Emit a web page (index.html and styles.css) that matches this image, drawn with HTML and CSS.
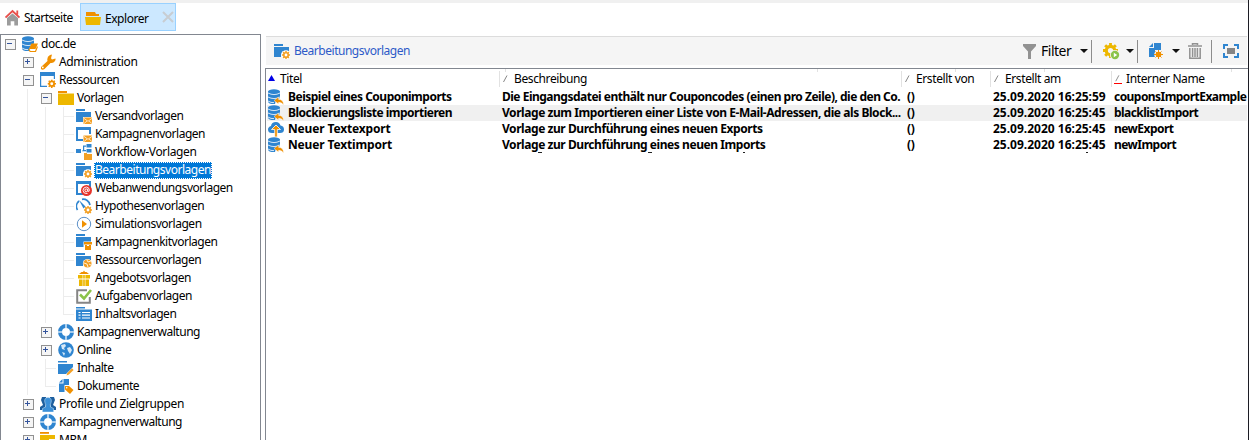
FILE: index.html
```html
<!DOCTYPE html>
<html lang="de">
<head>
<meta charset="utf-8">
<title>Explorer</title>
<link rel="stylesheet" href="styles.css">
</head>
<body>
<svg class="defs" width="0" height="0">
  <symbol id="slash" viewBox="0 0 8 10"><path d="M1.500 8L5 1.500" stroke="#777" stroke-width=".9"/></symbol>
  <symbol id="gear" viewBox="0 0 16 16"><circle cx="8" cy="8" r="4.5" fill="none" stroke="currentColor" stroke-width="3.400"/><path d="M8 0v3M8 13v3M0 8h3M13 8h3M2.3 2.3l2 2M11.7 11.7l2 2M2.3 13.7l2-2M11.7 4.3l2-2" stroke="currentColor" stroke-width="3"/></symbol>
  <symbol id="foldercut" viewBox="0 0 16 16"><path d="M0 1h9v2H0zM0 4h15v4H9q-2 1-2 6H0z" fill="#2f85d0"/></symbol>
  <symbol id="yfolder" viewBox="0 0 16 16"><path d="M0 1h9v2H0z" fill="#f09000"/><path d="M0 3.500h16V15H0z" fill="#edb700"/></symbol>
  <symbol id="window" viewBox="0 0 16 16"><path d="M0 1h15v7h-2V4H2v9h5v2H0z" fill="#2f85d0"/></symbol>
  <symbol id="mail" viewBox="0 0 16 16"><path d="M7.500 9.500H16V16H7.500z" fill="#f3a025"/><path d="M8 10.400l4 2.900 4-2.900M8 15.600l3-2.600M16 15.600L13 13" fill="none" stroke="#fff" stroke-width=".7"/></symbol>
  <symbol id="db" viewBox="0 0 16 16"><path d="M0 2.6v9.8C0 14 2.500 15 6 15h1l1-4 4-2V2.600z" fill="#2f85d0"/><ellipse cx="6" cy="2.6" rx="6" ry="2.4" fill="#2f85d0"/><path d="M0 4q6 3.200 12 0M0 8q6 3.200 12 0M0 12q3 2 6 1.600" fill="none" stroke="#fff" stroke-width=".8"/></symbol>
  <symbol id="import" viewBox="0 0 16 16"><use href="#db"/><path d="M6 11.500L10.500 8v2.300q5 .200 5 5.700-1.500-3-5-2.600V15z" fill="#f09000" stroke="#fff" stroke-width=".4"/></symbol>
  <symbol id="export" viewBox="0 0 16 16"><path d="M4 12Q0 12 0 8.500 0 6 3 5q.5-4 5-4 3.500 0 4.500 3.500Q16 5 16 8.500 16 12 12 12z" fill="#2f85d0"/><path d="M8 4l4.500 4.500H9.300V16H6.700V8.500H3.500z" fill="#f09000" stroke="#fff" stroke-width=".8"/></symbol>
  <symbol id="root" viewBox="0 0 16 16"><use href="#db"/><path d="M9.500 7.500H16l-2.500 5.500H7z" fill="#f09000"/><path d="M7 13q0 2.500 2 2.500h4.500l2-5" fill="none" stroke="#f09000" stroke-width="1.200"/></symbol>
  <symbol id="wrench" viewBox="0 0 16 16"><path d="M1 13l6.500-6Q6.500 3 10 1l2-.5-1 3.800 1 1.200 3.500-1L15.500 6q-1.500 3.500-5 3L4.500 15Q2.500 16.500 1 15z" fill="#f09000"/><circle cx="2.800" cy="13.400" r=".9" fill="#fff"/></symbol>
  <symbol id="wingear" viewBox="0 0 16 16"><path d="M0 0h15v7h-1.200V4H1.200v9.800H7V15H0z" fill="#2f85d0"/><use href="#gear" x="7.500" y="7.500" width="8.500" height="8.500" color="#f09000"/></symbol>
  <symbol id="f-mail" viewBox="0 0 16 16"><path d="M0 1h9v2H0zM0 4h15v5H7v5H0z" fill="#2f85d0"/><use href="#mail"/></symbol>
  <symbol id="w-mail" viewBox="0 0 16 16"><use href="#window"/><use href="#mail"/></symbol>
  <symbol id="flow" viewBox="0 0 16 16"><path d="M0 5h5v4H0zM10.500 0h5v3.500h-5zM10.500 5h5v3.500h-5zM6 6.500h1v-5h3v1.200H8.200V6H10v1.200H6z" fill="#2f85d0"/><path d="M8 9h3v1h5v6H8z" fill="#f3a025"/></symbol>
  <symbol id="f-gear" viewBox="0 0 16 16"><use href="#foldercut"/><circle cx="12" cy="12" r="4.700" class="halo"/><use href="#gear" x="8" y="8" width="8" height="8" color="#f3a025"/></symbol>
  <symbol id="web" viewBox="0 0 16 16"><use href="#window"/><circle cx="10.500" cy="10.500" r="5.500" fill="#e6332a"/><circle cx="10.300" cy="10.300" r="1.400" fill="none" stroke="#fff"/><path d="M11.800 8.700v2.500q1.500.800 1.700-1Q13 7 10.300 7 7 7.300 7 10.500 7.300 14 11.500 13.600" fill="none" stroke="#fff" stroke-width=".9"/></symbol>
  <symbol id="gauge" viewBox="0 0 16 16"><path d="M1.500 12A7 7 0 0 1 3 3M6 1.300A7 7 0 0 1 14 7" fill="none" stroke="#2f85d0" stroke-width="1.700"/><path d="M3 2l6.500 6.500L7.500 10.500z" fill="#2f85d0"/><use href="#gear" x="8" y="8" width="8" height="8" color="#f3a025"/></symbol>
  <symbol id="play" viewBox="0 0 16 16"><circle cx="8" cy="8" r="6.700" fill="#fff" stroke="#5b8fc8"/><path d="M6 4.300L11 8l-5 3.700z" fill="#f09000"/></symbol>
  <symbol id="f-box" viewBox="0 0 16 16"><path d="M0 0h9v2H0zM0 3h15v4.500H7.500V13H0z" fill="#2f85d0"/><path d="M8 8h8v2.500H8zM9 11h6v5H9z" fill="#f09000"/><path d="M11 11.500h2" stroke="#fff"/></symbol>
  <symbol id="f-globe" viewBox="0 0 16 16"><use href="#foldercut"/><circle cx="11.500" cy="11.500" r="4.600" fill="#fff"/><circle cx="11.500" cy="11.500" r="4" fill="#f3a025"/><path d="M8 11l3 1 1 3M11 8l1 2 3-1M13 12l2 1" fill="none" stroke="#fff" stroke-width=".8"/></symbol>
  <symbol id="gift" viewBox="0 0 16 16"><path d="M2 5h12v3.500H2zM3 9.500h10V16H3z" fill="#edb700"/><path d="M3 4l2.500-2h1.500L8 .5 9 2h1.500L13 4z" fill="#f09000"/><path d="M6.800 5v11M9.200 5v11" stroke="#fff" stroke-width=".6"/></symbol>
  <symbol id="check" viewBox="0 0 16 16"><path d="M11 2.200H1.200v12.600h12.600V9" fill="none" stroke="#858585" stroke-width="2"/><path d="M4 6.500l4 4L15 2" fill="none" stroke="#8bc34a" stroke-width="2.600"/></symbol>
  <symbol id="content" viewBox="0 0 16 16"><path d="M0 1h9v1.500H0zM0 3.500h16V15H0z" fill="#2f85d0"/><path d="M2.500 6.500h2M6 6.500h8M2.500 9.200h2M6 9.200h8M2.500 12h2M6 12h8" stroke="#fff" stroke-width="1.200"/></symbol>
  <symbol id="ring" viewBox="0 0 16 16"><circle cx="8" cy="8" r="6" fill="none" stroke="#2f85d0" stroke-width="4"/><path d="M8 0v4M8 12v4M0 8h4M12 8h4" stroke="#cfe3f5" stroke-width="1.600"/></symbol>
  <symbol id="globe" viewBox="0 0 16 16"><circle cx="8" cy="8" r="7.800" fill="#2f85d0"/><path d="M3 3l4-1 1 2-2 2 1 2-3-1zM9 6l3-1 2 3-2 4-2-3zM4 10l3 1-1 3z" fill="#d8e9f7"/></symbol>
  <symbol id="f-pen" viewBox="0 0 16 16"><path d="M0 1h9v1.500H0zM0 4h15v3L8 14H0z" fill="#2f85d0"/><path d="M8.500 15.500l.8-2.500L14 8.300l1.600 1.600-4.700 4.700z" fill="#f3a025"/></symbol>
  <symbol id="doc" viewBox="0 0 16 16"><path d="M5.500 1H11v6H6.500v7H1V5.500h4.500zM1 4.500L4.500 1v3.500z" fill="#2f85d0"/><path d="M7 8h4l4.500 4-3.500 4-5-4.500z" fill="#f09000"/><circle cx="8.700" cy="9.700" r=".8" fill="#fff"/></symbol>
  <symbol id="people" viewBox="0 0 16 16"><path d="M2 1h4v6l-1 7H0v-3l3-2-2-5zM14 1h-4v6l1 7h5v-3l-3-2 2-5z" fill="#1d5f9f"/><path d="M8 1.500c4 0 3.800 4 2.300 7L10.500 11l3 1.500V16h-11v-3.500l3-1.500.2-2.500C4.200 5.500 4 1.500 8 1.500z" fill="#3b90d8" stroke="#b9d8f1" stroke-width=".6"/></symbol>
  <symbol id="mrm" viewBox="0 0 16 16"><path d="M0 0h9v1.800H0z" fill="#f09000"/><path d="M0 3h15v4H9v8H0z" fill="#edb700"/></symbol>
</svg>

<nav class="tabs">
  <div class="tab home">
    <svg width="15" height="17" viewBox="0 0 15 17"><path d="M2 9l5.500-4.500L13 9v7.500H9.300v-4.300H5.700v4.300H2z" fill="#9c9c9c"/><path d="M.5 8.500l7-6.500 7 6.500M12.300 1.500v4" fill="none" stroke="#e8504c" stroke-width="1.800"/></svg>
    <span>Startseite</span>
  </div>
  <div class="tab active">
    <svg width="16" height="13" viewBox="0 0 16 13"><path d="M1 0h9l1 2h3v2H1z" fill="#f09000"/><path d="M0 5h16l-1 8H1z" fill="#edb700"/></svg>
    <span>Explorer</span>
    <svg class="close" width="12" height="12" viewBox="0 0 12 12"><path d="M1 1l10 10M11 1L1 11" stroke="#c8cdd2" stroke-width="2"/></svg>
  </div>
</nav>

<main class="panes">
  <div class="tree">
    <div class="node"><b class="box"></b><svg class="ic"><use href="#root"/></svg><span>doc.de</span></div>
    <div class="node"><i></i><b class="box plus"></b><svg class="ic"><use href="#wrench"/></svg><span class="wide">Administration</span></div>
    <div class="node"><i></i><b class="box"></b><svg class="ic"><use href="#wingear"/></svg><span>Ressourcen</span></div>
    <div class="node"><i></i><i class="v"></i><b class="box"></b><svg class="ic"><use href="#yfolder"/></svg><span>Vorlagen</span></div>
    <div class="node"><i></i><i class="v"></i><i class="v"></i><i class="v h"></i><svg class="ic"><use href="#f-mail"/></svg><span>Versandvorlagen</span></div>
    <div class="node"><i></i><i class="v"></i><i class="v"></i><i class="v h"></i><svg class="ic"><use href="#w-mail"/></svg><span>Kampagnenvorlagen</span></div>
    <div class="node"><i></i><i class="v"></i><i class="v"></i><i class="v h"></i><svg class="ic"><use href="#flow"/></svg><span class="wide">Workflow-Vorlagen</span></div>
    <div class="node"><i></i><i class="v"></i><i class="v"></i><i class="v h"></i><svg class="ic"><use href="#f-gear"/></svg><span class="selected">Bearbeitungsvorlagen</span></div>
    <div class="node"><i></i><i class="v"></i><i class="v"></i><i class="v h"></i><svg class="ic"><use href="#web"/></svg><span>Webanwendungsvorlagen</span></div>
    <div class="node"><i></i><i class="v"></i><i class="v"></i><i class="v h"></i><svg class="ic"><use href="#gauge"/></svg><span>Hypothesenvorlagen</span></div>
    <div class="node"><i></i><i class="v"></i><i class="v"></i><i class="v h"></i><svg class="ic"><use href="#play"/></svg><span>Simulationsvorlagen</span></div>
    <div class="node"><i></i><i class="v"></i><i class="v"></i><i class="v h"></i><svg class="ic"><use href="#f-box"/></svg><span>Kampagnenkitvorlagen</span></div>
    <div class="node"><i></i><i class="v"></i><i class="v"></i><i class="v h"></i><svg class="ic"><use href="#f-globe"/></svg><span>Ressourcenvorlagen</span></div>
    <div class="node"><i></i><i class="v"></i><i class="v"></i><i class="v h"></i><svg class="ic"><use href="#gift"/></svg><span>Angebotsvorlagen</span></div>
    <div class="node"><i></i><i class="v"></i><i class="v"></i><i class="v h"></i><svg class="ic"><use href="#check"/></svg><span>Aufgabenvorlagen</span></div>
    <div class="node"><i></i><i class="v"></i><i class="v"></i><i class="end h"></i><svg class="ic"><use href="#content"/></svg><span>Inhaltsvorlagen</span></div>
    <div class="node"><i></i><i class="v"></i><b class="box plus"></b><svg class="ic"><use href="#ring"/></svg><span>Kampagnenverwaltung</span></div>
    <div class="node"><i></i><i class="v"></i><b class="box plus"></b><svg class="ic"><use href="#globe"/></svg><span>Online</span></div>
    <div class="node"><i></i><i class="v"></i><i class="v h"></i><svg class="ic"><use href="#f-pen"/></svg><span>Inhalte</span></div>
    <div class="node"><i></i><i class="v"></i><i class="end h"></i><svg class="ic"><use href="#doc"/></svg><span>Dokumente</span></div>
    <div class="node"><i></i><b class="box plus"></b><svg class="ic"><use href="#people"/></svg><span class="wide">Profile und Zielgruppen</span></div>
    <div class="node"><i></i><b class="box plus"></b><svg class="ic"><use href="#ring"/></svg><span>Kampagnenverwaltung</span></div>
    <div class="node"><i></i><b class="box plus"></b><svg class="ic"><use href="#mrm"/></svg><span>MRM</span></div>
  </div>

  <section class="content">
    <header class="toolbar">
      <svg class="ic"><use href="#f-gear"/></svg>
      <h1>Bearbeitungsvorlagen</h1>
      <div class="tools">
        <svg width="13" height="15" viewBox="0 0 13 15"><path d="M0 0h13v2L8 7.500V15H5V7.500L0 2z" fill="#929292"/></svg>
        <span class="filter">Filter</span><em class="caret"></em><em class="sep"></em>
        <svg class="t-gear" width="17" height="17" viewBox="0 0 17 17"><use href="#gear" width="15" height="15" color="#edb700"/><circle cx="12" cy="12" r="5" fill="#f5f5f5"/><circle cx="12" cy="12" r="4.200" fill="#8bc34a"/><path d="M10.800 9.800l3.400 2.200-3.400 2.200z" fill="#fff"/></svg>
        <em class="caret"></em><em class="sep"></em>
        <svg class="t-new" width="14" height="16" viewBox="0 0 14 16"><path d="M5 0h7v7H6v7H0V5h5zM0 4l4-4v4z" fill="#2f85d0"/><circle cx="9.500" cy="11.500" r="4.300" fill="#f5f5f5"/><circle cx="9.500" cy="11.500" r="2.800" fill="#f09000"/><path d="M9.500 7v9M5 11.500h9M6.500 8.500l6 6M12.500 8.500l-6 6" stroke="#f09000" stroke-width="1"/></svg>
        <em class="caret"></em>
        <svg class="t-bin" width="14" height="16" viewBox="0 0 14 16"><path d="M4.500 2V.7h5V2M0 3h14M1.800 5v10.200h10.400V5M4.600 5v9M7 5v9M9.400 5v9" fill="none" stroke="#929292" stroke-width="1.500"/></svg>
        <em class="sep"></em>
        <svg class="t-full" width="16" height="14" viewBox="0 0 16 14"><path d="M1 5V1h4M11 1h4v4M15 9v4h-4M5 13H1V9" fill="none" stroke="#2f85d0" stroke-width="2"/><path d="M4 4h8v6H4z" fill="#858585"/></svg>
      </div>
    </header>

    <div class="grid">
      <div class="row head">
        <div><svg class="up" width="7" height="6"><path d="M3.500 0L7 6H0z" fill="#0000e6"/></svg>Titel</div>
        <div><svg class="sl"><use href="#slash"/></svg>Beschreibung</div>
        <div><svg class="sl"><use href="#slash"/></svg>Erstellt von</div>
        <div><svg class="sl"><use href="#slash"/></svg>Erstellt am</div>
        <div><svg class="sl red"><use href="#slash"/></svg>Interner Name</div>
      </div>
      <div class="row"><div><svg class="ic"><use href="#import"/></svg><span>Beispiel eines Couponimports</span></div><div class="long">Die Eingangsdatei enthält nur Couponcodes (einen pro Zeile), die den Co.</div><div>()</div><div>25.09.2020 16:25:59</div><div>couponsImportExample</div></div>
      <div class="row alt"><div><svg class="ic"><use href="#import"/></svg><span>Blockierungsliste importieren</span></div><div>Vorlage zum Importieren einer Liste von E-Mail-Adressen, die als Block...</div><div>()</div><div>25.09.2020 16:25:45</div><div>blacklistImport</div></div>
      <div class="row"><div><svg class="ic"><use href="#export"/></svg><span class="loose">Neuer Textexport</span></div><div>Vorlage zur Durchführung eines neuen Exports</div><div>()</div><div>25.09.2020 16:25:45</div><div>newExport</div></div>
      <div class="row"><div><svg class="ic"><use href="#import"/></svg><span class="loose">Neuer Textimport</span></div><div>Vorlage zur Durchführung eines neuen Imports</div><div>()</div><div>25.09.2020 16:25:45</div><div>newImport</div></div>
      <svg class="remnant" width="980" height="2"><path d="M272 .500h4M382 .500h4M477 .500h2M820 .500h2" stroke="#222"/></svg>
    </div>
  </section>
</main>
</body>
</html>
```
FILE: styles.css
```css
* { box-sizing: border-box; }
body {
  margin: 0;
  height: 440px;
  display: flex;
  flex-direction: column;
  overflow: hidden;
  background: #fff;
  color: #000;
  font: 12px/16px "Noto Sans", "Open Sans", sans-serif;
  letter-spacing: -0.48px;
  white-space: nowrap;
  border-right: 1px solid #1c1c24;
}
.defs { position: absolute; }
svg { display: block; flex: none; }
.ic { width: 16px; height: 16px; }
.halo { fill: #fff; }

.tabs { display: flex; height: 34px; flex: none; border-top: 3px solid #f0f0f0; }
.tab { display: flex; height: 28px; align-items: center; }
.home { width: 80px; padding: 1px 0 0 5px; gap: 4px; }
.active { width: 96px; background: #cce8ff; border: 1px solid #99d1ff; padding: 3px 0 0 4px; gap: 4px; letter-spacing: -0.45px; }
.close { margin: -3px 0 0 9px; }

.panes { display: flex; flex: 1; min-height: 0; }
.tree { width: 261px; flex: none; border: 1px solid #828790; border-bottom: 0; overflow: hidden; }
.node { display: flex; height: 18px; align-items: center; }
.node i, .node b { width: 18px; height: 18px; flex: none; }
.v { background: linear-gradient(#ececec, #ececec) 8px 0 / 1px 18px no-repeat; }
.end { background: linear-gradient(#ececec, #ececec) 8px 0 / 1px 9px no-repeat; }
.h::after { content: ""; display: block; height: 1px; margin: 9px 0 0 8px; width: 11px; background: #ececec; }
.box { display: block; padding: 4px; }
.box::before {
  content: "";
  display: block;
  width: 9px;
  height: 9px;
  border: 1px solid #919191;
  background: linear-gradient(#34549c, #34549c) 1px 3px / 5px 1px no-repeat, #f5f5f5;
}
.plus::before {
  background: linear-gradient(#34549c, #34549c) 1px 3px / 5px 1px no-repeat, linear-gradient(#34549c, #34549c) 3px 1px / 1px 5px no-repeat, #f5f5f5;
}
.node .ic { margin-left: 3px; }
.node span { height: 17px; line-height: 16px; margin-left: 2px; padding: 0 1px; }
.node .wide { letter-spacing: -0.36px; }
.node .selected { background: #0078d7; color: #fff; outline: 1px dotted #fff; outline-offset: -1px; }

.content { flex: 1; min-width: 0; padding: 2px 0 0 4px; display: flex; flex-direction: column; }
.toolbar { height: 29px; flex: none; margin: 0 1px 3px 1px; padding-left: 8px; display: flex; align-items: center; background: #f5f5f5; border-top: 1px solid #dcdcdc; }
.toolbar .halo { fill: #f5f5f5; }
.toolbar h1 { margin: 0 0 0 4px; font-size: 12px; font-weight: 400; color: #2d5ac8; }
.tools { margin-left: auto; display: flex; align-items: center; padding-right: 8px; }
.filter { font-size: 14px; margin-left: 5px; width: 39px; letter-spacing: -0.5px; }
.caret { border: 4px solid transparent; border-top-color: #111; border-bottom: 0; }
.sep { width: 1px; height: 23px; background: #8c8c8c; margin: 0 11px 0 3px; }
.t-gear { margin-right: 6px; }
.t-new { margin-right: 9px; }
.t-bin { margin: 0 6px 0 8px; }

.grid {
  flex: 1;
  border: solid #828790;
  border-width: 1px 0 0 1px;
  background:
    linear-gradient(#e2e2e2, #e2e2e2) 239px 0 / 1px 3px no-repeat,
    linear-gradient(#e2e2e2, #e2e2e2) 551px 0 / 1px 3px no-repeat,
    linear-gradient(#e2e2e2, #e2e2e2) 689px 0 / 1px 3px no-repeat,
    linear-gradient(#e2e2e2, #e2e2e2) 778px 0 / 1px 3px no-repeat,
    linear-gradient(#e2e2e2, #e2e2e2) 965px 0 / 1px 3px no-repeat;
}
.row { display: grid; grid-template-columns: 234px 402px 89px 121px 1fr; height: 16px; margin: 0 1px; font-weight: 700; letter-spacing: -0.44px; }
.row > div { padding-left: 1px; display: flex; align-items: center; line-height: 16px; }
.row > div:first-child { letter-spacing: -0.5px; }
.row > div:nth-child(3) { padding-left: 4px; }
.row > div:nth-child(4) { padding-left: 1px; letter-spacing: 0; }
.row > div:nth-child(5) { padding-left: 1px; letter-spacing: -0.55px; }
.row .long { letter-spacing: -0.5px; }
.row .loose { letter-spacing: -0.15px; }
.row .ic { margin-right: 4px; }
.alt { background: #f0f0f0; }
.row.head { height: 20px; margin: 0 2px 0 0; font-weight: 400; padding-bottom: 1px; }
.row.head > div { padding: 0; border-right: 1px solid #e2e2e2; margin-top: 2px; height: 16px; letter-spacing: -0.38px; }
.row.head > div:last-child { border: 0; }
.up { margin: -3px 5px 0 2px; }
.sl { width: 8px; height: 10px; margin: 0 4px 0 2px; }
.red { border-bottom: 1px solid #f00; }
.remnant { margin-top: -1px; }
```
